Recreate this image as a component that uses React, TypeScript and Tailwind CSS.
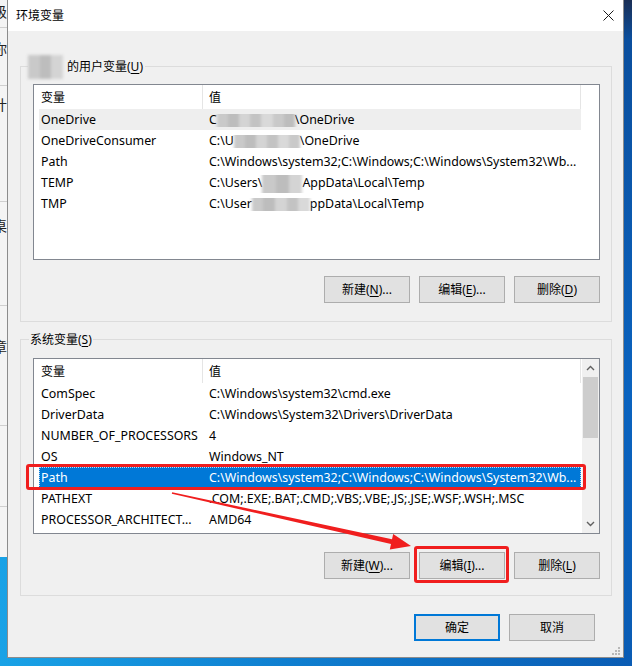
import React from "react";

const Blur = ({ w, h = 20 }: { w: number; h?: number }) => (
  <span
    className="inline-flex overflow-visible align-middle blur-[1.5px] -my-[4px]"
    style={{ width: w, height: h }}
  >
    {Array.from({ length: Math.max(1, Math.round(w / 12)) }).map((_, i) => (
      <span
        key={i}
        className="flex-1 h-full"
        style={{ background: ["#c9c9c9", "#bdbdbd", "#d4d4d4", "#c3c3c3", "#d9d9d9"][i % 5] }}
      />
    ))}
  </span>
);

const U = ({ c }: { c: string }) => <span className="underline underline-offset-[2px]">{c}</span>;

const Btn = ({ children, def = false }: { children: React.ReactNode; def?: boolean }) => (
  <div
    className={
      def
        ? "w-[86px] h-[27px] flex items-center justify-center border-2 border-[#0078d7] bg-[#e1e1e1] text-[12px] text-black"
        : "w-[86px] h-[27px] flex items-center justify-center border border-[#adadad] bg-[#e1e1e1] text-[12px] text-black"
    }
  >
    {children}
  </div>
);

type Row = { k: string; v: React.ReactNode; hover?: boolean; sel?: boolean };

const Header = () => (
  <div className="flex h-[24px] w-[547px] shrink-0 bg-white">
    <div className="w-[169px] border-r border-[#e5e5e5] pl-[7px] pt-[1px] flex items-center">变量</div>
    <div className="w-[378px] border-r border-[#e5e5e5] pl-[6px] pt-[1px] flex items-center">值</div>
  </div>
);

const RowView = ({ r }: { r: Row }) => (
  <div
    className={
      r.sel
        ? "ml-[5px] w-[542px] h-[21px] pt-[2px] flex items-center bg-[#0078d7] text-white border border-dotted border-[#b9dcf7] text-[12.4px]"
        : r.hover
        ? "ml-[5px] w-[542px] h-[21px] pt-[2px] flex items-center bg-[#eeeeee] text-[12.4px]"
        : "ml-[5px] w-[542px] h-[21px] pt-[2px] flex items-center text-[12.4px]"
    }
  >
    <div className={r.sel ? "w-[163px] pl-[1px] whitespace-nowrap overflow-hidden" : "w-[163px] pl-[2px] whitespace-nowrap overflow-hidden"}>{r.k}</div>
    <div className={r.sel ? "flex-1 pl-[6px] whitespace-nowrap overflow-hidden" : "flex-1 pl-[7px] whitespace-nowrap overflow-hidden"}>{r.v}</div>
  </div>
);

const userRows: Row[] = [
  { k: "OneDrive", v: <>C<Blur w={78} />\OneDrive</>, hover: true },
  { k: "OneDriveConsumer", v: <>C:\U<Blur w={66} />\OneDrive</> },
  { k: "Path", v: "C:\\Windows\\system32;C:\\Windows;C:\\Windows\\System32\\Wb..." },
  { k: "TEMP", v: <>C:\Users\<Blur w={40} h={26} />AppData\Local\Temp</> },
  { k: "TMP", v: <>C:\User<Blur w={58} />ppData\Local\Temp</> },
];

const sysRows: Row[] = [
  { k: "ComSpec", v: "C:\\Windows\\system32\\cmd.exe" },
  { k: "DriverData", v: "C:\\Windows\\System32\\Drivers\\DriverData" },
  { k: "NUMBER_OF_PROCESSORS", v: "4" },
  { k: "OS", v: "Windows_NT" },
  { k: "Path", v: "C:\\Windows\\system32;C:\\Windows;C:\\Windows\\System32\\Wb...", sel: true },
  { k: "PATHEXT", v: ".COM;.EXE;.BAT;.CMD;.VBS;.VBE;.JS;.JSE;.WSF;.WSH;.MSC" },
  { k: "PROCESSOR_ARCHITECT...", v: "AMD64" },
];

const Chevron = ({ up }: { up: boolean }) => (
  <svg width="9" height="6" viewBox="0 0 9 6">
    <path d={up ? "M1 5 L4.5 1.5 L8 5" : "M1 1 L4.5 4.5 L8 1"} fill="none" stroke="#606060" strokeWidth="1.4" />
  </svg>
);

export default function App() {
  return (
    <div className="relative w-[632px] h-[666px] overflow-hidden bg-[linear-gradient(90deg,#19a2e6_0%,#0f7fd0_45%,#0a5cb4_100%)] font-['Noto_Sans','Noto_Sans_CJK_SC',sans-serif] text-[12px] text-black leading-none">
      <div className="flex h-[658px]">
        {/* background window sliver */}
        <div className="w-[7px] h-[557px] bg-[#f4f4f4] overflow-hidden flex flex-col text-[14px] text-[#222]">
          <div className="h-[28px] border-b border-[#cfcfcf] relative">
            <span className="absolute left-[-7px] top-[5px]">级</span>
          </div>
          <div className="h-[58px] border-b border-[#cfcfcf] relative">
            <span className="absolute left-[-7px] top-[14px]">你</span>
          </div>
          <div className="h-[116px] border-b border-[#cfcfcf] relative">
            <span className="absolute left-[-7px] top-[12px]">计</span>
          </div>
          <div className="h-[104px] border-b border-[#cfcfcf] relative">
            <span className="absolute left-[-7px] top-[17px]">桌</span>
          </div>
          <div className="h-[120px] border-b border-[#cfcfcf] relative">
            <span className="absolute left-[-7px] top-[34px]">章</span>
          </div>
          <div className="h-[81px] border-b border-[#cfcfcf]" />
          <div className="flex-1" />
        </div>

        {/* dialog */}
        <div className="w-[617px] h-[658px] border border-t-0 border-[#8c8c8c] bg-[#f0f0f0] flex flex-col">
          <div className="h-[31px] bg-white flex items-center justify-between pl-[8px] pr-[9px] shrink-0">
            <span className="text-[12px]">环境变量</span>
            <svg width="11" height="11" viewBox="0 0 11 11">
              <path d="M0.5 0.5 L10.5 10.5 M10.5 0.5 L0.5 10.5" stroke="#1a1a1a" strokeWidth="1" />
            </svg>
          </div>

          {/* user group */}
          <div className="relative ml-[12px] mt-[35px] w-[592px] h-[256px] border border-[#dcdcdc] pt-[17px] pl-[12px] flex flex-col shrink-0">
            <div className="absolute left-[7px] -top-[11px] h-[21px] bg-[#f0f0f0] flex items-center pr-[2px]">
              <Blur w={35} h={24} />
              <span className="ml-[4px]">的用户变量(<U c="U" />)</span>
            </div>
            <div className="w-[567px] h-[176px] border border-[#828790] bg-white flex flex-col">
              <Header />
              {userRows.map((r, i) => (
                <RowView key={i} r={r} />
              ))}
            </div>
            <div className="w-[567px] mt-[16px] flex justify-end gap-[9px]">
              <Btn>新建(<U c="N" />)...</Btn>
              <Btn>编辑(<U c="E" />)...</Btn>
              <Btn>删除(<U c="D" />)</Btn>
            </div>
          </div>

          {/* system group */}
          <div className="relative ml-[12px] mt-[17px] w-[592px] h-[257px] border border-[#dcdcdc] pt-[18px] pl-[12px] flex flex-col shrink-0">
            <div className="absolute left-[8px] -top-[11px] h-[21px] bg-[#f0f0f0] flex items-center px-[1px]">
              <span>系统变量(<U c="S" />)</span>
            </div>
            <div className="w-[567px] h-[176px] border border-[#828790] bg-white flex">
              <div className="w-[548px] flex flex-col">
                <Header />
                {sysRows.map((r, i) => (
                  <RowView key={i} r={r} />
                ))}
              </div>
              <div className="w-[17px] bg-[#f0f0f0] flex flex-col items-center">
                <div className="h-[18px] w-full flex items-center justify-center">
                  <Chevron up />
                </div>
                <div className="w-[15px] h-[61px] bg-[#cdcdcd]" />
                <div className="flex-1" />
                <div className="h-[18px] w-full flex items-center justify-center">
                  <Chevron up={false} />
                </div>
              </div>
            </div>
            <div className="w-[567px] mt-[18px] flex justify-end gap-[9px]">
              <Btn>新建(<U c="W" />)...</Btn>
              <Btn>编辑(<U c="I" />)...</Btn>
              <Btn>删除(<U c="L" />)</Btn>
            </div>
          </div>

          <div className="mt-[18px] pr-[28px] flex justify-end gap-[9px]">
            <Btn def>确定</Btn>
            <Btn>取消</Btn>
          </div>
          <div className="flex-1 flex justify-end items-end pr-[3px] pb-[2px]">
            <svg width="8" height="8" viewBox="0 0 8 8">
              <rect x="6" y="0" width="2" height="2" fill="#b8b8b8" />
              <rect x="3" y="3" width="2" height="2" fill="#b8b8b8" />
              <rect x="6" y="3" width="2" height="2" fill="#b8b8b8" />
              <rect x="0" y="6" width="2" height="2" fill="#b8b8b8" />
              <rect x="3" y="6" width="2" height="2" fill="#b8b8b8" />
              <rect x="6" y="6" width="2" height="2" fill="#b8b8b8" />
            </svg>
          </div>
        </div>

        {/* desktop right sliver */}
        <div className="w-[8px] h-[658px] bg-[linear-gradient(180deg,#1b2f55_0%,#0b4f9e_6%,#0a63bf_60%,#0a5cb4_100%)]" />
      </div>

      {/* red annotations */}
      <div className="absolute left-[26px] top-[464px] w-[560px] h-[26px] border-[3px] border-[#f01e1e] rounded-[3px]" />
      <div className="absolute left-[414px] top-[546px] w-[95px] h-[37px] border-[3px] border-[#f01e1e] rounded-[3px]" />
      <svg className="absolute left-0 top-0" width="632" height="666" viewBox="0 0 632 666">
        <polygon
          points="172.2,492.3 392.0,539.3 393.2,533.9 411,546 389.8,549.5 391.0,544.1 171.8,493.7"
          fill="#f01e1e"
        />
      </svg>
    </div>
  );
}
